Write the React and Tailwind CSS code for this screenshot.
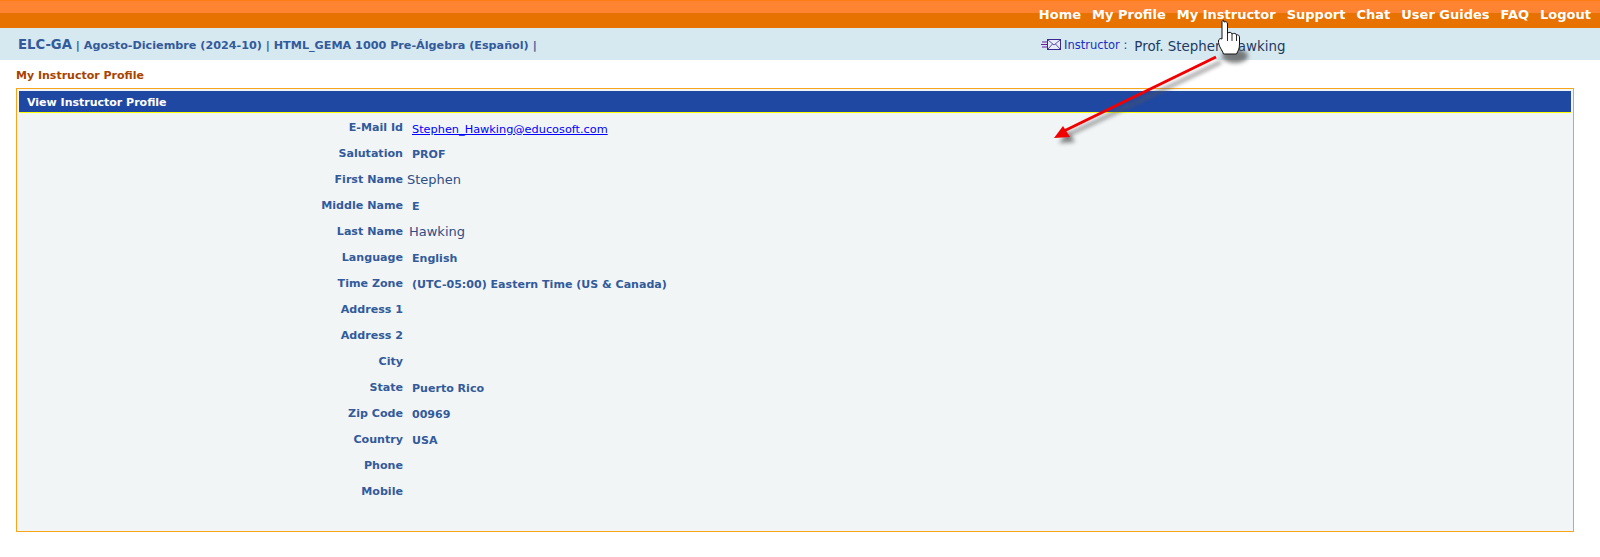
const font = { fontFamily: '"DejaVu Sans", Verdana, sans-serif' };

const rows = [
  ["E-Mail Id", "link"],
  ["Salutation", "PROF"],
  ["First Name", "Stephen", "-ml-[5px]"],
  ["Middle Name", "E"],
  ["Last Name", "Hawking", "-ml-[3px]"],
  ["Language", "English"],
  ["Time Zone", "(UTC-05:00) Eastern Time (US & Canada)"],
  ["Address 1", ""],
  ["Address 2", ""],
  ["City", ""],
  ["State", "Puerto Rico"],
  ["Zip Code", "00969"],
  ["Country", "USA"],
  ["Phone", ""],
  ["Mobile", ""],
];

const nav = ["Home", "My Profile", "My Instructor", "Support", "Chat", "User Guides", "FAQ", "Logout"];

function Row({ label, value, shift }) {
  const plain = value === "Stephen" || value === "Hawking";
  return (
    <div className="grid h-[26px] grid-cols-[384px_1fr] items-center gap-x-[9px]">
      <div className="pt-[2px] text-right text-[11.1px] font-bold leading-none text-[#335a9b]">{label}</div>
      <div>
        {value === "link" ? (
          <a href="#" className="block pt-[6px] text-[11.3px] text-[#0000ff] underline">Stephen_Hawking@educosoft.com</a>
        ) : plain ? (
          <span className={`block pt-[2px] text-[13px] text-[#2f4f86] ${shift}`}>{value}</span>
        ) : (
          <span className="text-[11.05px] font-bold text-[#335a9b]">{value}</span>
        )}
      </div>
    </div>
  );
}

export default function App() {
  return (
    <div className="relative h-[557px] overflow-hidden bg-white" style={font}>
      <header className="flex h-[28px] items-center justify-end gap-[11px] border-t border-[#ff7b16] bg-[linear-gradient(#ff8431_0,#ff8431_12px,#e87200_12px)] pr-[9px]">
        {nav.map((n) => (
          <a key={n} className="text-[13px] font-bold text-white">{n}</a>
        ))}
      </header>

      <div className="flex h-[32px] items-center bg-[#d6e8f0] pl-[18px]">
        <div className="w-[1022px] whitespace-nowrap pt-[2px] text-[11.2px] font-bold text-[#335a9b]">
          <span className="text-[13.2px] font-bold">ELC-GA</span> | Agosto-Diciembre (2024-10) | HTML_GEMA 1000 Pre-Álgebra (Español) |
        </div>
        <div className="ml-[1px] flex pt-[2px]">
          <svg width="20" height="12" viewBox="0 0 20 12">
            <rect x="6.5" y="0.5" width="13" height="10" fill="#e8eef8" stroke="#3a2a90" />
            <path d="M7 1l6 5 6-5M7 10l4.500-5M19 10l-4.500-5" fill="none" stroke="#3a2a90" strokeWidth="0.8" />
            <path d="M1 3h6M0 5.500h6M1 8h6" stroke="#6a1ea0" strokeWidth="1.200" />
          </svg>
        </div>
        <span className="ml-[3px] pt-[4px] text-[11.5px] text-[#1a2fc0]">Instructor :</span>
        <span className="ml-[7px] pt-[6px] text-[13.4px] text-[#223a60]">Prof. Stephen Hawking</span>
      </div>

      <div className="pl-[16px] pt-[9px] text-[11px] font-bold leading-[14px] text-[#a84300]">My Instructor Profile</div>

      <section className="mx-[16px] mt-[5px] h-[444px] w-[1558px] border border-[#f9a51a] bg-[#f1f5f6] px-[2px] pt-[2px]">
        <div className="flex h-[22px] items-center border-b border-[#ffff00] bg-[#1f48a3] pl-[8px] pt-[3px] text-[11px] font-bold text-white">
          View Instructor Profile
        </div>
        <div className="pt-[1px]">
          {rows.map(([l, v, s]) => (
            <Row key={l} label={l} value={v} shift={s} />
          ))}
        </div>
      </section>

      <svg className="absolute left-[1040px] top-[10px]" width="240" height="150" viewBox="1040 10 240 150">
        <defs>
          <filter id="blur" x="-20%" y="-20%" width="140%" height="140%">
            <feGaussianBlur stdDeviation="2" />
          </filter>
        </defs>
        <g filter="url(#blur)" fill="#555" opacity="0.75">
          <path d="M1221 62L1068 135" stroke="#555" strokeWidth="3" />
          <path d="M1059 143L1068 131L1075 142Z" />
          <ellipse cx="1235" cy="56" rx="13" ry="7" />
        </g>
        <path d="M1216 57L1064 131" stroke="#f00000" strokeWidth="3" />
        <path d="M1054 138L1063 126L1070 137Z" fill="#f00000" />
        <path
          d="M1224 22c1.500-1 3.500 0 3.500 2v9c2-1 4-1 4.500 1 2-1 4-1 4.500 1 1.500-.5 3 0 3 3v6c0 5-1.500 7-3 10h-13c-1-3-2-4-3-6-1.500-2.500-2-5-2-7 0-2 2-3 3.500-2v-17c0-1 .5-1.500 1.500-2z"
          fill="#fff"
          stroke="#111"
          strokeWidth="1"
        />
        <path d="M1227.500 33v8M1232 34v7M1236.500 35v6" stroke="#111" strokeWidth="0.900" fill="none" />
      </svg>
    </div>
  );
}
